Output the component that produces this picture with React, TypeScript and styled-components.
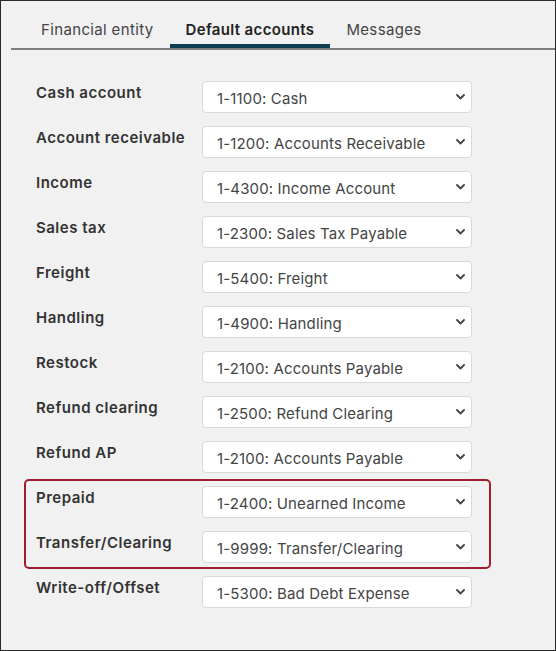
import React from "react";
import styled, { createGlobalStyle } from "styled-components";

const GlobalStyle = createGlobalStyle`
  * { box-sizing: border-box; }
  body {
    margin: 0;
    font-family: Inter, "Noto Sans", sans-serif;
    background: #f1f1f1;
  }
`;

interface Account {
  label: string;
  value: string;
}

const accounts: Account[] = [
  { label: "Cash account", value: "1-1100: Cash" },
  { label: "Account receivable", value: "1-1200: Accounts Receivable" },
  { label: "Income", value: "1-4300: Income Account" },
  { label: "Sales tax", value: "1-2300: Sales Tax Payable" },
  { label: "Freight", value: "1-5400: Freight" },
  { label: "Handling", value: "1-4900: Handling" },
  { label: "Restock", value: "1-2100: Accounts Payable" },
  { label: "Refund clearing", value: "1-2500: Refund Clearing" },
  { label: "Refund AP", value: "1-2100: Accounts Payable" },
];

const highlighted: Account[] = [
  { label: "Prepaid", value: "1-2400: Unearned Income" },
  { label: "Transfer/Clearing", value: "1-9999: Transfer/Clearing" },
];

const trailing: Account[] = [
  { label: "Write-off/Offset", value: "1-5300: Bad Debt Expense" },
];

const tabs = ["Financial entity", "Default accounts", "Messages"];

const Chevron = () => (
  <svg width="9" height="6" viewBox="0 0 9 6" fill="none">
    <path
      d="M1 1l3.5 3.5L8 1"
      stroke="#444"
      strokeWidth="1.8"
      strokeLinecap="round"
      strokeLinejoin="round"
    />
  </svg>
);

const AccountRow: React.FC<{ account: Account }> = ({ account }) => (
  <Row>
    <Label>{account.label}</Label>
    <SelectWrap>
      <Select defaultValue={account.value}>
        <option>{account.value}</option>
      </Select>
      <ChevronBox>
        <Chevron />
      </ChevronBox>
    </SelectWrap>
  </Row>
);

const App: React.FC = () => {
  return (
    <>
      <GlobalStyle />
      <Frame>
        <TabBar>
          {tabs.map((t) => (
            <Tab key={t} active={t === "Default accounts"}>
              {t}
            </Tab>
          ))}
        </TabBar>
        <Form>
          {accounts.map((a) => (
            <AccountRow key={a.label} account={a} />
          ))}
          <Highlight>
            {highlighted.map((a) => (
              <AccountRow key={a.label} account={a} />
            ))}
          </Highlight>
          {trailing.map((a) => (
            <AccountRow key={a.label} account={a} />
          ))}
        </Form>
      </Frame>
    </>
  );
};

export default App;

const Frame = styled.div`
  width: 556px;
  height: 651px;
  border: 1px solid #2b2b2b;
  background: #f1f1f1;
  padding-top: 10px;
`;

const TabBar = styled.div`
  display: flex;
  margin-left: 10px;
  padding-left: 14px;
  border-bottom: 2px solid #7f7f7f;
`;

const Tab = styled.div<{ active?: boolean }>`
  padding: 8px 16px 3px;
  font-size: 15px;
  line-height: 22px;
  letter-spacing: 0.35px;
  color: ${({ active }) => (active ? "#222" : "#444")};
  font-weight: ${({ active }) => (active ? 600 : 400)};
  border-bottom: 4px solid ${({ active }) => (active ? "#0d3d4f" : "transparent")};
`;

const Form = styled.div`
  display: flex;
  flex-direction: column;
  align-items: flex-start;
  gap: 13px;
  padding: 31px 0 0 35px;
`;

const Row = styled.div`
  display: grid;
  grid-template-columns: 166px 270px;
  align-items: start;
`;

const Label = styled.div`
  font-size: 15px;
  line-height: 22px;
  font-weight: 600;
  letter-spacing: 0.5px;
  color: #333;
  padding-top: 1px;
`;

const SelectWrap = styled.div`
  position: relative;
  height: 32px;
`;

const Select = styled.select`
  appearance: none;
  width: 100%;
  height: 32px;
  padding: 2px 28px 0 14px;
  font-family: Inter, "Noto Sans", sans-serif;
  font-size: 15px;
  letter-spacing: 0.15px;
  color: #444;
  background: #fff;
  border: 1px solid #d9d9d9;
  border-radius: 4px;
  outline: none;
`;

const ChevronBox = styled.span`
  position: absolute;
  right: 7px;
  top: 13px;
  display: flex;
  pointer-events: none;
`;

const Highlight = styled.div`
  display: flex;
  flex-direction: column;
  gap: 13px;
  margin: -7px -19px -6px -12px;
  padding: 5px 17px 4px 10px;
  border: 2px solid #a31c2c;
  border-radius: 5px;
`;
